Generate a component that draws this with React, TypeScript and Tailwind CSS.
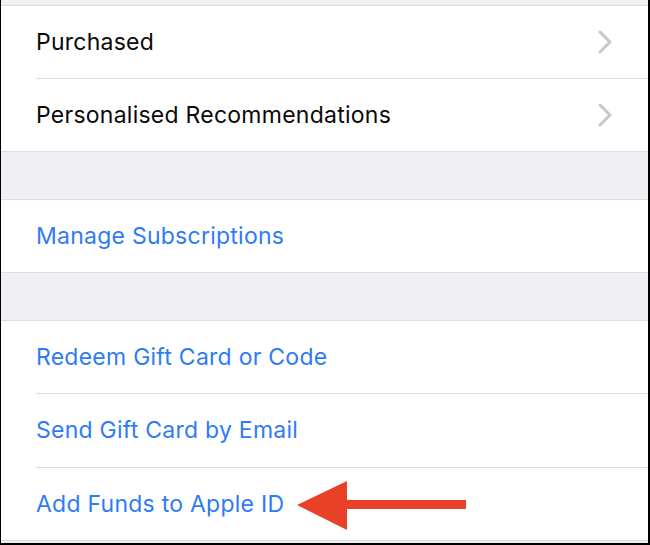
import React from "react";

const font = { fontFamily: "Inter, 'Noto Sans', sans-serif" };

function Chevron() {
  return (
    <svg width="16" height="24" viewBox="0 0 16 24" className="mr-[35px]">
      <path d="M3 2 L13 12 L3 22" fill="none" stroke="#c7c7cc" strokeWidth="3" strokeLinecap="round" strokeLinejoin="round" />
    </svg>
  );
}

function Row({ label, blue, chevron, last, h = "h-[72px]" }: { label: string; blue?: boolean; chevron?: boolean; last?: boolean; h?: string }) {
  return (
    <div className="pl-[35px] bg-white">
      <div className={`${h} box-content flex items-center justify-between ${last ? "" : "border-b border-[#dedee2]"}`}>
        <span className={`text-[23px] tracking-[0.25px] ${blue ? "text-[#2f7bf5]" : "text-[#0a0a0a]"}`}>{label}</span>
        {chevron && <Chevron />}
      </div>
    </div>
  );
}

export default function App() {
  return (
    <div className="w-[650px] h-[545px] bg-black pl-[1px] pr-[2px] pb-[2px] overflow-hidden" style={font}>
      <div className="relative h-full bg-[#efeff4] flex flex-col">
        <div className="h-[5px] border-b border-[#dedee2] box-content" />
        <div className="border-b border-[#dedee2]">
          <Row label="Purchased" chevron />
          <Row label="Personalised Recommendations" chevron last />
        </div>
        <div className="h-[47px] border-b border-[#dedee2] box-content" />
        <div className="border-b border-[#dedee2]">
          <Row label="Manage Subscriptions" blue last />
        </div>
        <div className="h-[47px] border-b border-[#dedee2] box-content" />
        <div className="border-b border-[#dedee2]">
          <Row label="Redeem Gift Card or Code" blue />
          <Row label="Send Gift Card by Email" blue h="h-[73px]" />
          <Row label="Add Funds to Apple ID" blue last />
        </div>
        <svg className="absolute left-[295px] top-[481px]" width="172" height="50" viewBox="0 0 172 50">
          <polygon points="1,24 51,0 51,19 170,19 170,28 51,28 51,49" fill="#e94128" />
        </svg>
      </div>
    </div>
  );
}
